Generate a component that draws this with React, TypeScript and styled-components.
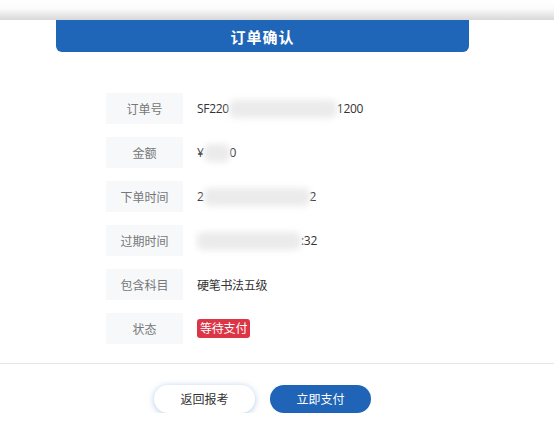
import React from "react";
import styled, { createGlobalStyle } from "styled-components";

const GlobalStyle = createGlobalStyle`
  html, body {
    margin: 0;
    padding: 0;
    background: #fff;
    font-family: "Open Sans", "Noto Sans CJK SC", sans-serif;
  }
`;

const TopShade = styled.div`
  height: 20px;
  background: linear-gradient(#ffffff 0%, #fafafa 45%, #d8d8d8 100%);
`;

const Card = styled.div`
  width: 413px;
  margin-left: 56px;
`;

const Header = styled.div`
  height: 32px;
  background: #2066b8;
  border-radius: 0 0 6px 6px;
  color: #fff;
  font-size: 15px;
  font-weight: 700;
  display: flex;
  align-items: center;
  justify-content: center;
  letter-spacing: 1px;
`;

const InfoList = styled.div`
  display: flex;
  flex-direction: column;
  gap: 13px;
  padding: 41px 0 19px 50px;
`;

const Row = styled.div`
  display: flex;
  align-items: center;
  gap: 14px;
`;

const Label = styled.div`
  width: 77px;
  height: 31px;
  background: #f6f8fa;
  color: #777;
  font-size: 12px;
  display: flex;
  align-items: center;
  justify-content: center;
`;

const Value = styled.div`
  font-size: 12px;
  color: #333;
  display: flex;
  align-items: center;
  letter-spacing: -0.3px;
`;

const Masked = styled.span<{ $w: number }>`
  display: inline-block;
  width: ${(p) => p.$w}px;
  height: 18px;
  background: #ebebeb;
  filter: blur(3px);
  border-radius: 6px;
`;

const Badge = styled.span`
  background: #dc3545;
  color: #fff;
  font-size: 12px;
  padding: 1px 3px;
  border-radius: 3px;
  line-height: 17px;
  letter-spacing: -0.2px;
`;

const Divider = styled.div`
  height: 1px;
  background: #e6e6e6;
`;

const Actions = styled.div`
  width: 413px;
  margin-left: 56px;
  display: flex;
  justify-content: center;
  gap: 15px;
  padding-top: 21px;
`;

const Button = styled.button<{ $primary?: boolean }>`
  width: 101px;
  height: 28px;
  border-radius: 14px;
  border: none;
  font-family: inherit;
  font-size: 12px;
  cursor: pointer;
  background: ${(p) => (p.$primary ? "#1f64b6" : "#fff")};
  color: ${(p) => (p.$primary ? "#fff" : "#333")};
  box-shadow: ${(p) =>
    p.$primary ? "none" : "0 1px 6px rgba(32, 102, 184, 0.35)"};
`;

const rows: { label: string; value: React.ReactNode }[] = [
  {
    label: "订单号",
    value: (
      <>
        SF220
        <Masked $w={108} />
        1200
      </>
    ),
  },
  {
    label: "金额",
    value: (
      <>
        ¥ <Masked $w={26} />0
      </>
    ),
  },
  {
    label: "下单时间",
    value: (
      <>
        2<Masked $w={106} />2
      </>
    ),
  },
  {
    label: "过期时间",
    value: (
      <>
        <Masked $w={104} />:32
      </>
    ),
  },
  { label: "包含科目", value: "硬笔书法五级" },
  { label: "状态", value: <Badge>等待支付</Badge> },
];

export default function App() {
  return (
    <>
      <GlobalStyle />
      <TopShade />
      <Card>
        <Header>订单确认</Header>
        <InfoList>
          {rows.map((r) => (
            <Row key={r.label}>
              <Label>{r.label}</Label>
              <Value>{r.value}</Value>
            </Row>
          ))}
        </InfoList>
      </Card>
      <Divider />
      <Actions>
        <Button>返回报考</Button>
        <Button $primary>立即支付</Button>
      </Actions>
    </>
  );
}
